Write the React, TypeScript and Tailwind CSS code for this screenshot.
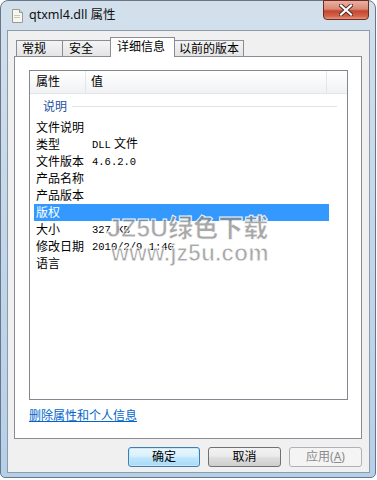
import React from 'react';

const rows = [
  { k: '文件说明', v: null },
  { k: '类型', v: ['DLL', ' 文件'] },
  { k: '文件版本', v: ['4.6.2.0', ''] },
  { k: '产品名称', v: null },
  { k: '产品版本', v: null },
  { k: '版权', v: null, sel: true },
  { k: '大小', v: ['327 KB', ''] },
  { k: '修改日期', v: ['2010/2/9 1:40', ''] },
  { k: '语言', v: null },
];

function FileIcon() {
  return (
    <svg width="11" height="14" viewBox="0 0 11 14">
      <path d="M0.5 0.5h7l3 3v10h-10z" fill="#f7f7f2" stroke="#9a9a90" />
      <path d="M7.5 0.5v3h3" fill="#dcdcd0" stroke="#9a9a90" />
      <rect x="2" y="6" width="6" height="1" fill="#c8c8c0" />
      <rect x="2" y="8" width="6" height="1" fill="#c8c8c0" />
    </svg>
  );
}

export default function App() {
  return (
    <div className="w-[377px] h-[480px] bg-white overflow-hidden font-['Noto_Sans','Noto_Sans_CJK_SC',sans-serif] text-[12px] text-black">
      <div className="relative w-[376px] h-[478px] rounded-t-[8px] rounded-b-[5px] border border-[#66778a] bg-[linear-gradient(to_bottom,#d3e0ec_0%,#c6d8e9_40%,#b6cfe9_100%)] flex flex-col pl-[6px] pr-[5px] pb-[4px]">
        {/* Title bar */}
        <div className="h-[29px] flex items-center shrink-0">
          <div className="ml-[5px] mt-[1px]">
            <FileIcon />
          </div>
          <span className="ml-[6px] text-[12.5px] leading-none text-[#111]">
            qtxml4.dll 属性
          </span>
          <div className="ml-auto mr-[1px] self-start -mt-px w-[46px] h-[20px] rounded-b-[4px] border border-[#6e2a20] bg-[linear-gradient(to_bottom,#eab0a3_0%,#d88a77_45%,#c7452e_55%,#d2664b_85%,#e59a83_100%)] flex items-center justify-center">
            <svg width="14" height="12" viewBox="0 0 14 12">
              <path d="M2 1.5l10 9M12 1.5l-10 9" stroke="#4a2a26" strokeWidth="4" strokeLinecap="square" />
              <path d="M2 1.5l10 9M12 1.5l-10 9" stroke="#ffffff" strokeWidth="2.2" strokeLinecap="square" />
            </svg>
          </div>
        </div>

        {/* Client area */}
        <div className="flex-1 bg-[#f0f0f0] border border-[#8d9aa9] flex flex-col pl-[6px] pr-[7px] pt-[6px]">
          {/* Tabs */}
          <div className="h-[19px] flex items-end pl-[2px]">
            <div className="w-[47px] h-[16px] border border-b-0 border-[#898c95] bg-[linear-gradient(to_bottom,#f4f4f4,#e4e4e4)] pl-[5px] leading-[16px]">常规</div>
            <div className="-ml-px w-[49px] h-[16px] border border-b-0 border-[#898c95] bg-[linear-gradient(to_bottom,#f4f4f4,#e4e4e4)] pl-[6px] leading-[16px]">安全</div>
            <div className="-ml-px relative z-10 -mb-px w-[65px] h-[20px] border border-b-0 border-[#898c95] bg-white pl-[6px] leading-[18px]">详细信息</div>
            <div className="-ml-px w-[70px] h-[16px] border border-b-0 border-[#898c95] bg-[linear-gradient(to_bottom,#f4f4f4,#e4e4e4)] pl-[4px] leading-[16px]">以前的版本</div>
          </div>

          {/* Tab panel */}
          <div className="h-[383px] border border-[#898c95] bg-white flex flex-col">
            <div className="relative ml-[14px] mt-[13px] w-[319px] h-[330px] border border-[#828790] bg-white">
              <div className="h-[23px] flex border-b border-[#e3e5e9] bg-[linear-gradient(to_bottom,#ffffff,#f1f2f4)]">
                <div className="w-[56px] pl-[6px] leading-[22px] border-r border-[#e3e5e9]">属性</div>
                <div className="w-[241px] pl-[5px] leading-[22px] border-r border-[#e3e5e9]">值</div>
              </div>

              <div className="h-[25px] flex items-center pl-[13px] pr-[10px]">
                <span className="text-[#1e4f9c] leading-none">说明</span>
                <div className="flex-1 ml-[5px] h-px bg-[#dfe2ea]" />
              </div>

              {rows.map((r) => (
                <div
                  key={r.k}
                  className={`ml-[4px] w-[295px] h-[17px] flex items-center pl-[2px] leading-[17px] ${r.sel ? 'bg-[#3399ff] text-white' : ''}`}
                >
                  <span className="w-[56px] shrink-0">{r.k}</span>
                  {r.v && (
                    <span className="whitespace-pre">
                      <span className="font-['Liberation_Mono',monospace] text-[10.5px]">{r.v[0]}</span>
                      <span>{r.v[1]}</span>
                    </span>
                  )}
                </div>
              ))}

              {/* watermark */}
              <div className="absolute left-[77px] top-[145px] text-[25px] font-black leading-none text-[rgba(140,140,140,0.75)] [-webkit-text-stroke:1px_rgba(255,255,255,0.9)] font-['Liberation_Sans','Noto_Sans_CJK_SC',sans-serif]">
                JZ5U绿色下载
              </div>
              <div className="absolute left-[81px] top-[171px] text-[23px] font-black leading-none text-[rgba(140,140,140,0.75)] [-webkit-text-stroke:1px_rgba(255,255,255,0.9)] font-['Liberation_Sans',sans-serif]">
                www.jz5u.com
              </div>
            </div>

            <div className="ml-[14px] mt-[8px] leading-[16px] text-[#0066cc] underline">删除属性和个人信息</div>
          </div>

          {/* Buttons */}
          <div className="mt-[8px] flex justify-end gap-[8px]">
            <div className="w-[72px] h-[20px] rounded-[3px] border border-[#3c7fb1] bg-[linear-gradient(to_bottom,#eaf6fd_0%,#d9f0fc_45%,#bee6fd_55%,#a7d9f5_100%)] shadow-[inset_0_0_0_1px_#c8e8fa] flex items-center justify-center leading-none">确定</div>
            <div className="w-[73px] h-[20px] rounded-[3px] border border-[#707070] bg-[linear-gradient(to_bottom,#f2f2f2_0%,#ebebeb_45%,#dddddd_55%,#cfcfcf_100%)] flex items-center justify-center leading-none">取消</div>
            <div className="w-[73px] h-[20px] rounded-[3px] border border-[#adb2b5] bg-[#f4f4f4] text-[#8a8a8a] flex items-center justify-center leading-none">
              应用(<span className="underline">A</span>)
            </div>
          </div>
        </div>
      </div>
    </div>
  );
}
